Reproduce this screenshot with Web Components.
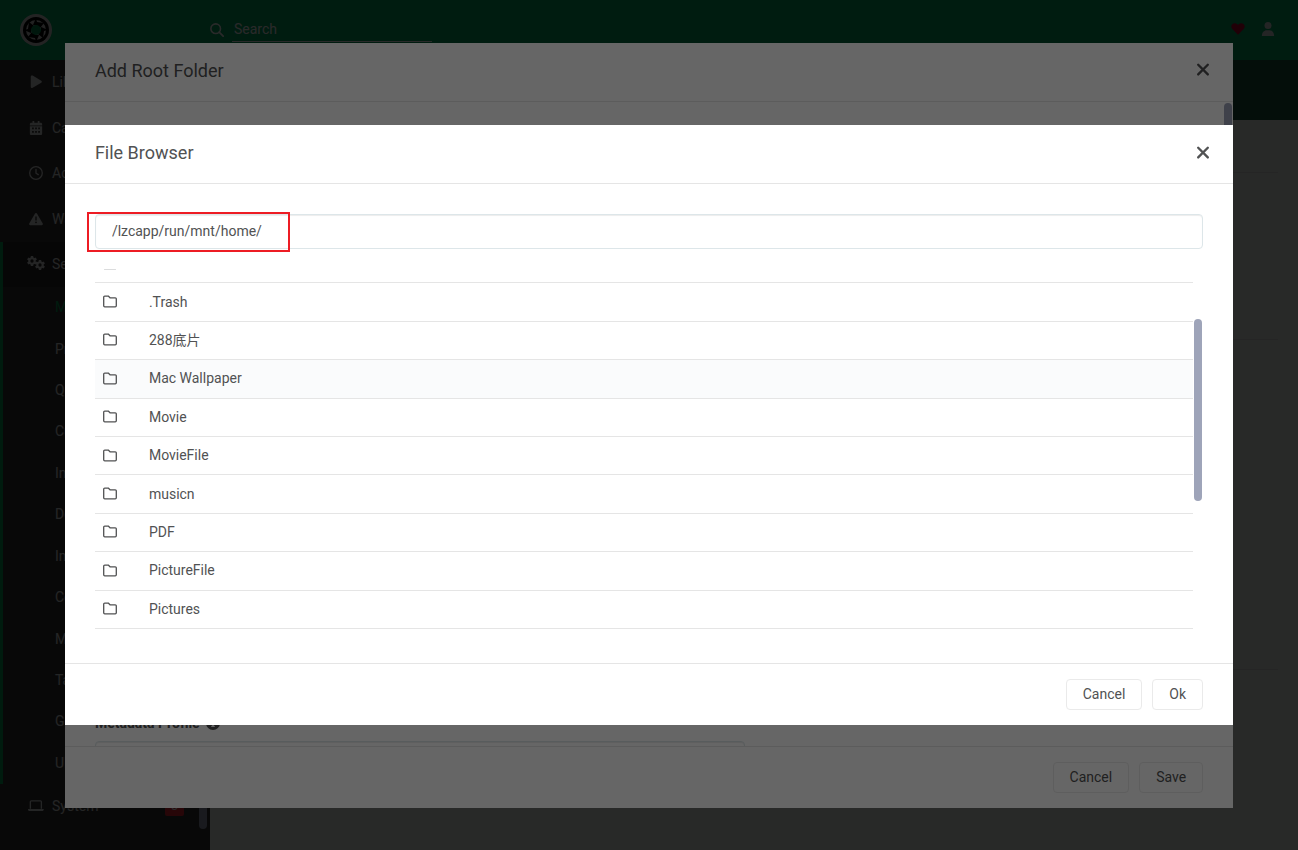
<!DOCTYPE html>
<html lang="en">
<head>
<meta charset="utf-8">
<title>Lidarr</title>
<style>
  html, body {
    height: 100%;
    margin: 0;
  }
  body {
    overflow: hidden;
    background: #f6faf8;
    color: #515253;
    font: 14px/21px Roboto, "Noto Sans CJK SC", sans-serif;
  }
</style>
</head>
<body>
<lidarr-page></lidarr-page>

<modal-dialog heading="Add Root Folder" size="large">
  <root-folder-form></root-folder-form>
  <spinner-button slot="footer">Cancel</spinner-button>
  <spinner-button slot="footer">Save</spinner-button>
</modal-dialog>

<modal-dialog heading="File Browser" size="medium">
  <file-browser path="/lzcapp/run/mnt/home/"></file-browser>
  <spinner-button slot="footer">Cancel</spinner-button>
  <spinner-button slot="footer">Ok</spinner-button>
</modal-dialog>

<script>
const ICONS = {
  play: '<path fill="currentColor" d="M2 2C2 .8 3.200.1 4.200.700L14 6.500c.9.600.9 1.700 0 2.300l-9.800 5.800C3.200 15.200 2 14.500 2 13.400z"/>',
  calendar: '<path fill="currentColor" fill-rule="evenodd" d="M4 0h2v2h4V0h2v2h1.500c.8 0 1.500.7 1.500 1.500V5H1V3.500C1 2.700 1.700 2 2.500 2H4zM1 6h14v8.500c0 .8-.7 1.500-1.500 1.500h-11C1.700 16 1 15.300 1 14.500zM3.500 7.500v2h2v-2zm3.500 0v2h2v-2zm3.500 0v2h2v-2zM3.500 11.500v2h2v-2zm3.500 0v2h2v-2zm3.500 0v2h2v-2z"/>',
  clock: '<circle cx="8" cy="8" r="7.200" fill="none" stroke="currentColor" stroke-width="1.500"/><path fill="none" stroke="currentColor" stroke-width="1.500" stroke-linecap="round" d="M8 4v4.200l2.600 1.700"/>',
  warning: '<path fill="currentColor" fill-rule="evenodd" d="M8 1c.5 0 .9.200 1.100.6l6.600 11.400c.5.900-.1 2-1.200 2h-13c-1.100 0-1.700-1.100-1.200-2L6.900 1.600C7.100 1.200 7.500 1 8 1zM7.200 5v4.700h1.600V5zM8 10.800a1 1 0 1 0 0 2 1 1 0 0 0 0-2z"/>',
  laptop: '<path fill="none" stroke="currentColor" stroke-width="1.500" d="M2.700 11V3.200c0-.6.400-1 1-1h10.600c.6 0 1 .4 1 1V11"/><path fill="currentColor" d="M0 11.500h18v.4c0 1-.7 1.800-1.700 1.800H1.700C.7 13.700 0 12.900 0 11.900z"/>',
  search: '<circle cx="6.500" cy="6.500" r="5.500" fill="none" stroke="currentColor" stroke-width="1.800"/><path stroke="currentColor" stroke-width="2" stroke-linecap="round" d="M10.500 10.500l4.500 4.500"/>',
  heart: '<path fill="currentColor" d="M8 14.500L1.500 8C-.2 6.200 0 3.500 1.800 2.200 3.500.9 5.800 1.100 7.300 2.700l.7.700.7-.7c1.500-1.600 3.800-1.800 5.500-.5C16 3.500 16.200 6.200 14.500 8z"/>',
  user: '<circle cx="8" cy="4" r="4" fill="currentColor"/><path fill="currentColor" d="M1 16c0-4 2.500-6.500 5.500-6.500h3c3 0 5.500 2.500 5.500 6.500z"/>',
  close: '<path fill="none" stroke="currentColor" stroke-width="2.700" stroke-linecap="round" d="M2.500 2l11 11m0-11l-11 11"/>',
  info: '<path fill="currentColor" fill-rule="evenodd" d="M8 0a8 8 0 1 0 0 16A8 8 0 0 0 8 0zM8 3a1.300 1.300 0 1 1 0 2.600A1.300 1.300 0 0 1 8 3zM6.200 6.800h2.800v4.200h1v1.600H6v-1.600h1V8.400h-.8z"/>',
  folder: '<path fill="none" stroke="currentColor" stroke-width="1.500" stroke-linejoin="round" d="M2 1.200h4l2 2h6c.7 0 1.200.5 1.200 1.200v8c0 .7-.5 1.200-1.200 1.200H2c-.7 0-1.200-.5-1.200-1.200V2.400c0-.7.500-1.200 1.200-1.200z"/>',
  parent: '<path fill="none" stroke="currentColor" stroke-width="1.500" d="M8 12V3M4.500 6L8 2.500 11.500 6"/><path stroke="#c8c9ca" stroke-width="1.500" d="M1.200 13.700h13.600"/>'
};

// A six-toothed gear, used twice by the settings icon.
function gear(cx, cy, r) {
  let teeth = "";
  for (let a = 0; a < 360; a += 60) {
    teeth += `<rect x="${cx - r / 4}" y="${cy - r}" width="${r / 2}" height="${r}" transform="rotate(${a} ${cx} ${cy})" fill="currentColor"/>`;
  }
  return `<g mask="url(#hole${cx})">${teeth}<circle cx="${cx}" cy="${cy}" r="${r * 0.75}" fill="currentColor"/></g>
    <mask id="hole${cx}"><rect width="20" height="16" fill="#fff"/><circle cx="${cx}" cy="${cy}" r="${r * 0.33}" fill="#000"/></mask>`;
}

ICONS.cogs = gear(5, 5, 5) + gear(13, 9, 5);

// Shutter blades of the logo, one per quarter turn.
const BLADES = [0, 90, 180, 270].map((a) =>
  `<path fill="#000" d="M16 4l1 4 7 1-4 5-4-3-3 0z" transform="rotate(${a} 16 16)"/>`
).join("");

class SvgIcon extends HTMLElement {
  constructor() {
    super();
    this.attachShadow({ mode: "open" });
  }

  connectedCallback() {
    const name = this.getAttribute("name");
    const size = this.getAttribute("size") || 14;
    const box = name === "cogs" || name === "laptop" ? "0 0 18 16" : "0 0 16 16";
    this.shadowRoot.innerHTML = `
      <style>
        :host { display: inline-flex; flex: none; justify-content: center; }
        svg { display: block; height: ${size}px; }
      </style>
      <svg viewBox="${box}" aria-hidden="true">${ICONS[name]}</svg>
    `;
  }
}

class PageHeader extends HTMLElement {
  constructor() {
    super();
    this.attachShadow({ mode: "open" });
    this.shadowRoot.innerHTML = `
      <style>
        :host {
          display: flex;
          align-items: center;
          height: 60px;
          background: #00ab66;
          color: #fff;
        }
        .logo { width: 190px; padding-left: 20px; }
        .logo svg { display: block; width: 32px; height: 32px; }
        label { display: flex; align-items: center; gap: 8px; }
        input {
          width: 200px;
          height: 24px;
          padding: 0 2px 2px;
          box-sizing: border-box;
          border: 0;
          border-bottom: 1px solid #fff;
          outline: none;
          background: none;
          color: inherit;
          font: inherit;
        }
        input::placeholder { color: #fff; opacity: 1; }
        .right { display: flex; gap: 16px; margin-left: auto; padding-right: 23px; }
        .right svg-icon { padding-bottom: 2px; }
        a { display: flex; color: #e1e2e3; }
        .donate { color: #c4002f; }
      </style>
      <a class="logo" href="#" aria-label="Home">
        <svg viewBox="0 0 32 32">
          <circle cx="16" cy="16" r="16" fill="#d9d9d9"/>
          <circle cx="16" cy="16" r="13" fill="#000"/>
          <circle cx="16" cy="16" r="10" fill="#d0d0d0"/>
          ${BLADES}
          <circle cx="16" cy="16" r="5" fill="#009252"/>
        </svg>
      </a>
      <label><svg-icon name="search"></svg-icon><input type="text" placeholder="Search" aria-label="Search"></label>
      <div class="right">
        <a class="donate" href="#" aria-label="Donate"><svg-icon name="heart"></svg-icon></a>
        <a href="#" aria-label="User"><svg-icon name="user"></svg-icon></a>
      </div>
    `;
  }
}

class PageSidebar extends HTMLElement {
  constructor() {
    super();
    this.attachShadow({ mode: "open" });
    this.links = [
      ["play", "Library"],
      ["calendar", "Calendar"],
      ["clock", "Activity"],
      ["warning", "Wanted"]
    ];
    this.settings = [
      "Media Management", "Profiles", "Quality", "Custom Formats", "Indexers", "Download Clients",
      "Import Lists", "Connect", "Metadata", "Tags", "General", "UI"
    ];
    this._render();
  }

  _link([icon, title]) {
    return `<a href="#"><svg-icon name="${icon}"></svg-icon>${title}</a>`;
  }

  _render() {
    this.shadowRoot.innerHTML = `
      <style>
        :host {
          display: block;
          position: relative;
          flex: none;
          width: 210px;
          overflow: hidden;
          background: #353535;
        }
        a {
          display: flex;
          align-items: center;
          box-sizing: border-box;
          min-height: 45px;
          padding-left: 24px;
          color: #e1e2e3;
          text-decoration: none;
        }
        svg-icon { width: 24px; margin-right: 4px; padding-bottom: 1px; }
        .links, .children { display: grid; grid-auto-rows: 1fr; }
        .links { height: 182px; }
        .group { border-left: 3px solid #00a65b; }
        .group a { padding-left: 21px; }
        .group > a { background: #252525; }
        .children { height: 497px; }
        .children a { min-height: 0; padding-left: 52px; }
        .children a.active { color: #00a65b; }
        .badge {
          margin-left: auto;
          margin-right: 26px;
          padding: 0 6px;
          border-radius: 2px;
          background: #f02535;
          color: #fff;
          font-size: 12px;
          line-height: 19px;
        }
        .thumb {
          position: absolute;
          top: 2px;
          right: 3px;
          bottom: 21px;
          width: 8px;
          border-radius: 4px;
          background: #9ea4b9;
        }
      </style>
      <nav>
        <div class="links">${this.links.map(this._link).join("")}</div>
        <div class="group">
          <a href="#"><svg-icon name="cogs" size="16"></svg-icon>Settings</a>
          <div class="children">
            ${this.settings.map((s, i) => `<a href="#"${i === 0 ? ' class="active"' : ""}>${s}</a>`).join("")}
          </div>
        </div>
        <a href="#"><svg-icon name="laptop"></svg-icon>System<span class="badge">3</span></a>
      </nav>
      <div class="thumb"></div>
    `;
  }
}

class LidarrPage extends HTMLElement {
  constructor() {
    super();
    this.attachShadow({ mode: "open" });
    this.shadowRoot.innerHTML = `
      <style>
        :host { display: flex; flex-direction: column; height: 100%; }
        .main { display: flex; flex: 1; min-height: 0; }
        main { flex: 1; overflow: hidden; }
        .toolbar { height: 60px; background: #1d563d; }
        .content { padding: 20px; }
        section { height: 167px; }
        section.tall { height: 330px; }
        section::before {
          content: "";
          display: block;
          height: 32px;
          border-bottom: 1px solid #e5e5e5;
        }
      </style>
      <page-header></page-header>
      <div class="main">
        <page-sidebar></page-sidebar>
        <main>
          <div class="toolbar"></div>
          <div class="content">
            <section></section>
            <section class="tall"></section>
            <section></section>
          </div>
        </main>
      </div>
    `;
  }
}

class ModalDialog extends HTMLElement {
  constructor() {
    super();
    this.attachShadow({ mode: "open" });
  }

  connectedCallback() {
    const heading = this.getAttribute("heading");
    this.shadowRoot.innerHTML = `
      <style>
        :host {
          position: fixed;
          inset: 0;
          display: flex;
          align-items: center;
          justify-content: center;
          background: rgba(0, 0, 0, 0.6);
        }
        .modal {
          display: flex;
          flex-direction: column;
          width: 90%;
          height: 90%;
          background: #fff;
        }
        :host([size="medium"]) .modal { max-height: 600px; }
        header {
          display: flex;
          align-items: center;
          justify-content: space-between;
          height: 55px;
          padding: 0 23px 3px 30px;
          border-bottom: 1px solid #e5e5e5;
        }
        h2 { margin: 0; font-size: 18px; font-weight: 400; line-height: 27px; }
        .close {
          display: flex;
          padding: 0;
          border: 0;
          background: none;
          color: inherit;
          cursor: pointer;
        }
        .body { display: flex; flex: 1; min-height: 0; }
        ::slotted(:not([slot])) { flex: 1; min-width: 0; }
        footer {
          display: flex;
          justify-content: flex-end;
          gap: 10px;
          padding: 15px 30px;
          border-top: 1px solid #e5e5e5;
        }
      </style>
      <div class="modal" role="dialog" aria-label="${heading}">
        <header>
          <h2>${heading}</h2>
          <button class="close" aria-label="Close"><svg-icon name="close"></svg-icon></button>
        </header>
        <div class="body"><slot></slot></div>
        <footer><slot name="footer"></slot></footer>
      </div>
    `;
    this.shadowRoot.querySelector(".close").addEventListener("click", () => this.remove());
  }
}

class SpinnerButton extends HTMLElement {
  constructor() {
    super();
    this.attachShadow({ mode: "open" });
    this.shadowRoot.innerHTML = `
      <style>
        :host { display: block; }
        button {
          display: block;
          height: 31px;
          padding: 0 16px;
          border: 1px solid #eaeaea;
          border-radius: 4px;
          background: #fff;
          color: #515253;
          font: inherit;
          cursor: pointer;
        }
      </style>
      <button type="button"><slot></slot></button>
    `;
  }
}

class RootFolderForm extends HTMLElement {
  constructor() {
    super();
    this.attachShadow({ mode: "open" });
    this.shadowRoot.innerHTML = `
      <style>
        :host { display: flex; overflow: hidden; }
        form {
          display: flex;
          flex: 1;
          flex-direction: column;
          justify-content: flex-end;
          padding-left: 30px;
        }
        label {
          display: flex;
          align-items: center;
          gap: 6px;
          margin-bottom: 7px;
          font-weight: 700;
        }
        select {
          flex: none;
          width: 100%;
          max-width: 650px;
          height: 35px;
          margin-bottom: -30px;
          border: 1px solid #dde6e9;
          border-radius: 4px;
          background: #fff;
          box-shadow: inset 0 1px 1px rgba(0, 0, 0, 0.075);
          appearance: none;
        }
        .thumb {
          flex: none;
          width: 8px;
          height: 80%;
          margin: 1px;
          border-radius: 4px;
          background: #9ea4b9;
        }
      </style>
      <form>
        <label for="profile">Metadata Profile <svg-icon name="info"></svg-icon></label>
        <select id="profile"></select>
      </form>
      <div class="thumb"></div>
    `;
  }
}

class FileBrowser extends HTMLElement {
  constructor() {
    super();
    this.attachShadow({ mode: "open" });
    this.folders = [
      ".Trash", "288底片", "Mac Wallpaper", "Movie", "MovieFile",
      "musicn", "PDF", "PictureFile", "Pictures"
    ];
  }

  connectedCallback() {
    const rows = this.folders.map((name) => `
      <tr${name === "Mac Wallpaper" ? ' class="hover"' : ""}>
        <td class="type"><svg-icon name="folder"></svg-icon></td>
        <td>${name}</td>
      </tr>`).join("");

    this.shadowRoot.innerHTML = `
      <style>
        :host {
          display: flex;
          flex-direction: column;
          gap: 20px;
          padding: 30px;
        }
        .path { position: relative; display: flex; }
        input {
          flex: 1;
          height: 35px;
          box-sizing: border-box;
          padding: 5px 16px 7px;
          border: 1px solid #dde6e9;
          border-radius: 4px;
          outline: none;
          background: #fff;
          box-shadow: inset 0 1px 1px rgba(0, 0, 0, 0.075);
          color: inherit;
          font: inherit;
        }
        .mark {
          position: absolute;
          top: -2px;
          left: -8px;
          width: 203px;
          height: 40px;
          box-sizing: border-box;
          border: 2px solid #ed1c24;
          pointer-events: none;
        }
        .list { display: flex; flex: 1; gap: 1px; min-height: 0; padding-right: 1px; }
        .scroller { flex: 1; overflow: hidden; }
        table {
          width: 100%;
          height: 384px;
          margin-bottom: 20px;
          border-collapse: separate;
          border-spacing: 0;
          table-layout: fixed;
        }
        td { height: 21px; padding: 0 8px; border-bottom: 1px solid #e5e5e5; }
        .type { width: 30px; }
        svg-icon { display: flex; width: 14px; }
        .hover td { background: #fafbfc; }
        .thumb {
          width: 8px;
          height: 50%;
          margin-top: 50px;
          border-radius: 4px;
          background: #9ea4b9;
        }
      </style>
      <div class="path">
        <input type="text" value="${this.getAttribute("path")}" aria-label="Path">
        <div class="mark"></div>
      </div>
      <div class="list">
        <div class="scroller">
          <table>
            <tbody>
              <tr><td class="type"><svg-icon name="parent"></svg-icon></td><td></td></tr>
              ${rows}
            </tbody>
          </table>
        </div>
        <div class="thumb"></div>
      </div>
    `;
    // Scrolled past most of the parent folder row
    this.shadowRoot.querySelector(".scroller").scrollTop = 24;
  }
}

customElements.define("svg-icon", SvgIcon);
customElements.define("page-header", PageHeader);
customElements.define("page-sidebar", PageSidebar);
customElements.define("lidarr-page", LidarrPage);
customElements.define("modal-dialog", ModalDialog);
customElements.define("spinner-button", SpinnerButton);
customElements.define("root-folder-form", RootFolderForm);
customElements.define("file-browser", FileBrowser);
</script>
</body>
</html>
